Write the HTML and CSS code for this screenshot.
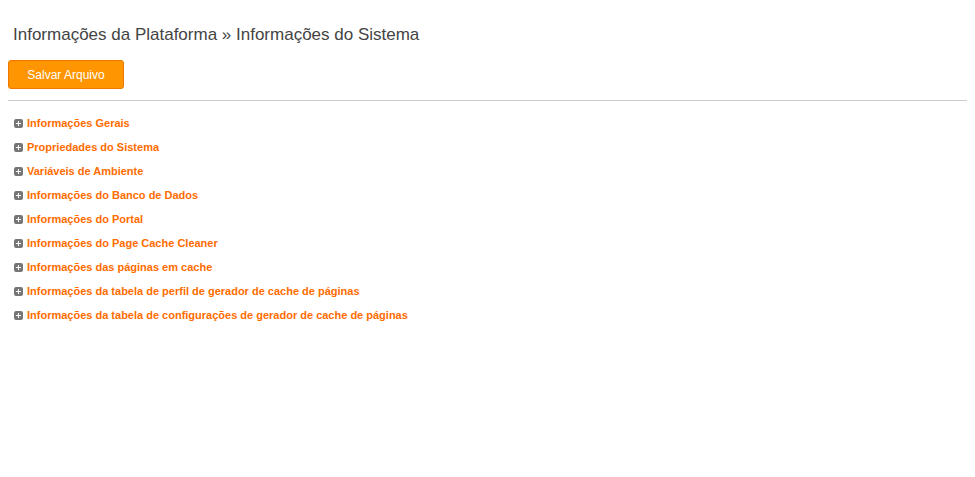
FILE: index.html
```html
<!DOCTYPE html>
<html lang="pt">
<head>
  <meta charset="UTF-8">
  <title>Informações do Sistema</title>
  <link rel="stylesheet" href="styles.css">
</head>
<body>
  <div class="page">
    <h2 class="title">Informações da Plataforma » Informações do Sistema</h2>
    <div class="toolbar">
      <button class="btn-save">Salvar Arquivo</button>
    </div>
    <ul class="sections">
      <li><span class="toggle"></span><a href="#">Informações Gerais</a></li>
      <li><span class="toggle"></span><a href="#">Propriedades do Sistema</a></li>
      <li><span class="toggle"></span><a href="#">Variáveis de Ambiente</a></li>
      <li><span class="toggle"></span><a href="#">Informações do Banco de Dados</a></li>
      <li><span class="toggle"></span><a href="#">Informações do Portal</a></li>
      <li><span class="toggle"></span><a href="#">Informações do Page Cache Cleaner</a></li>
      <li><span class="toggle"></span><a href="#">Informações das páginas em cache</a></li>
      <li><span class="toggle"></span><a href="#">Informações da tabela de perfil de gerador de cache de páginas</a></li>
      <li><span class="toggle"></span><a href="#">Informações da tabela de configurações de gerador de cache de páginas</a></li>
    </ul>
  </div>
</body>
</html>
```

FILE: styles.css
```css
body {
  margin: 0;
  padding: 0;
  background: #fff;
  font-family: "Liberation Sans", Arial, sans-serif;
  color: #444;
}

.page {
  padding: 0 8px;
}

.title {
  margin: 0;
  padding: 25px 5px 0;
  font-size: 17px;
  font-weight: normal;
  line-height: 20px;
  color: #444;
}

.toolbar {
  padding: 15px 0 11px;
  border-bottom: 1px solid #ccc;
}

.btn-save {
  display: block;
  width: 116px;
  height: 29px;
  padding: 0;
  border: 1px solid #f07800;
  border-radius: 3px;
  background: #ff9500;
  color: #fff;
  font-family: "Liberation Sans", Arial, sans-serif;
  font-size: 12px;
  cursor: pointer;
}

.sections {
  list-style: none;
  margin: 0;
  padding: 10px 0 0 6px;
}

.sections li {
  display: flex;
  align-items: center;
  height: 24px;
}

.toggle {
  position: relative;
  width: 9px;
  height: 9px;
  margin-right: 4px;
  border-radius: 2px;
  background: #777;
}

.toggle::before,
.toggle::after {
  content: "";
  position: absolute;
  background: #fff;
}

.toggle::before {
  left: 2px;
  top: 4px;
  width: 5px;
  height: 1px;
}

.toggle::after {
  left: 4px;
  top: 2px;
  width: 1px;
  height: 5px;
}

.sections a {
  font-size: 11px;
  font-weight: bold;
  color: #ff6c00;
  text-decoration: none;
}
```
